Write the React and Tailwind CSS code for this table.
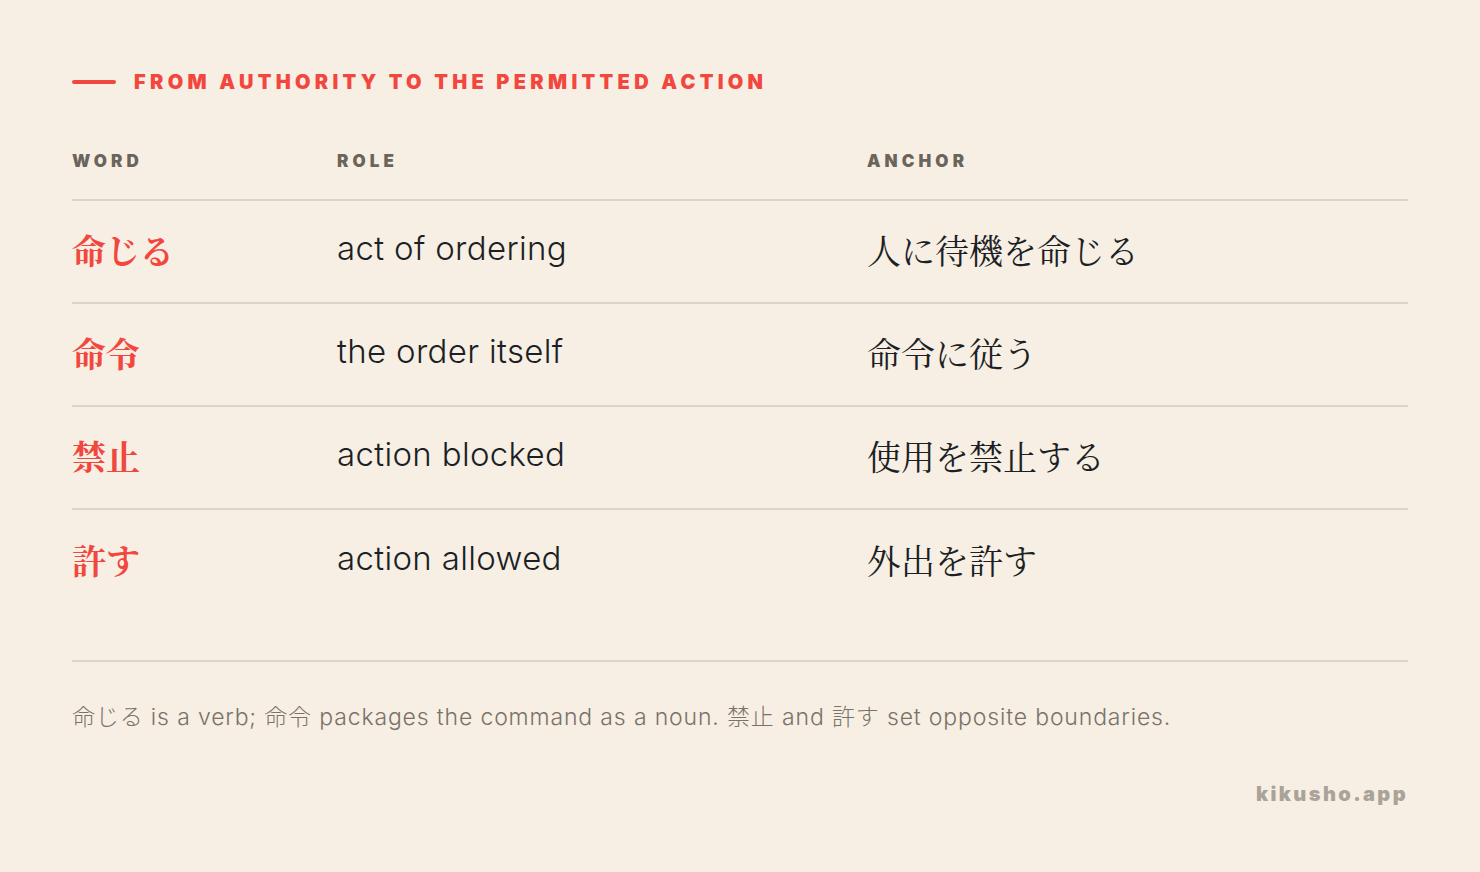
const rows = [
  { word: "命じる", role: "act of ordering", anchor: "人に待機を命じる" },
  { word: "命令", role: "the order itself", anchor: "命令に従う" },
  { word: "禁止", role: "action blocked", anchor: "使用を禁止する" },
  { word: "許す", role: "action allowed", anchor: "外出を許す" },
];

const latin = "font-['Inter','Noto_Sans_CJK_JP',sans-serif]";
const mincho = "font-['Noto_Serif_CJK_JP','Noto_Sans_CJK_JP',serif]";

export default function App() {
  return (
    <div className={`min-h-[872px] w-[1480px] bg-[#f7efe3] px-[72px] pt-[68px] ${latin}`}>
      {/* HEADER */}
      <div className="flex items-center gap-[18px]">
        <div className="h-[4px] w-[44px] rounded-full bg-[#f2473f]" />
        <h1 className="text-[20px] font-black uppercase leading-[28px] tracking-[0.215em] text-[#f2473f]">
          From authority to the permitted action
        </h1>
      </div>

      {/* TABLE HEAD */}
      <div className="mt-[53px] grid grid-cols-[265px_530px_1fr] border-b-2 border-[#dcd4cb] pb-[26px] text-[17px] font-black uppercase leading-[24px] tracking-[0.24em] text-[#6b645c]">
        <div>Word</div>
        <div>Role</div>
        <div>Anchor</div>
      </div>

      {/* ROWS */}
      {rows.map((r, i) => (
        <div
          key={r.word}
          className={`grid h-[103px] grid-cols-[265px_530px_1fr] items-center pb-[5px] ${
            i < rows.length - 1 ? "border-b-2 border-[#dcd4cb]" : ""
          }`}
        >
          <div className={`${mincho} text-[34px] font-bold text-[#f2473f]`}>{r.word}</div>
          <div className="text-[33px] font-light tracking-[0.01em] text-[#1c1f26]">{r.role}</div>
          <div className={`${mincho} text-[34px] text-[#1c1f26]`}>{r.anchor}</div>
        </div>
      ))}

      {/* FOOTNOTE */}
      <div className="mt-[47px] border-t-2 border-[#dcd4cb] pt-[39px] text-[23px] font-light leading-[32px] tracking-[0.037em] text-[#7a726a]">
        命じる is a verb; 命令 packages the command as a noun. 禁止 and 許す set opposite boundaries.
      </div>

      <div className="mt-[46px] text-right text-[20px] font-black tracking-[0.12em] text-[#aaa39a]">
        kikusho.app
      </div>
    </div>
  );
}
